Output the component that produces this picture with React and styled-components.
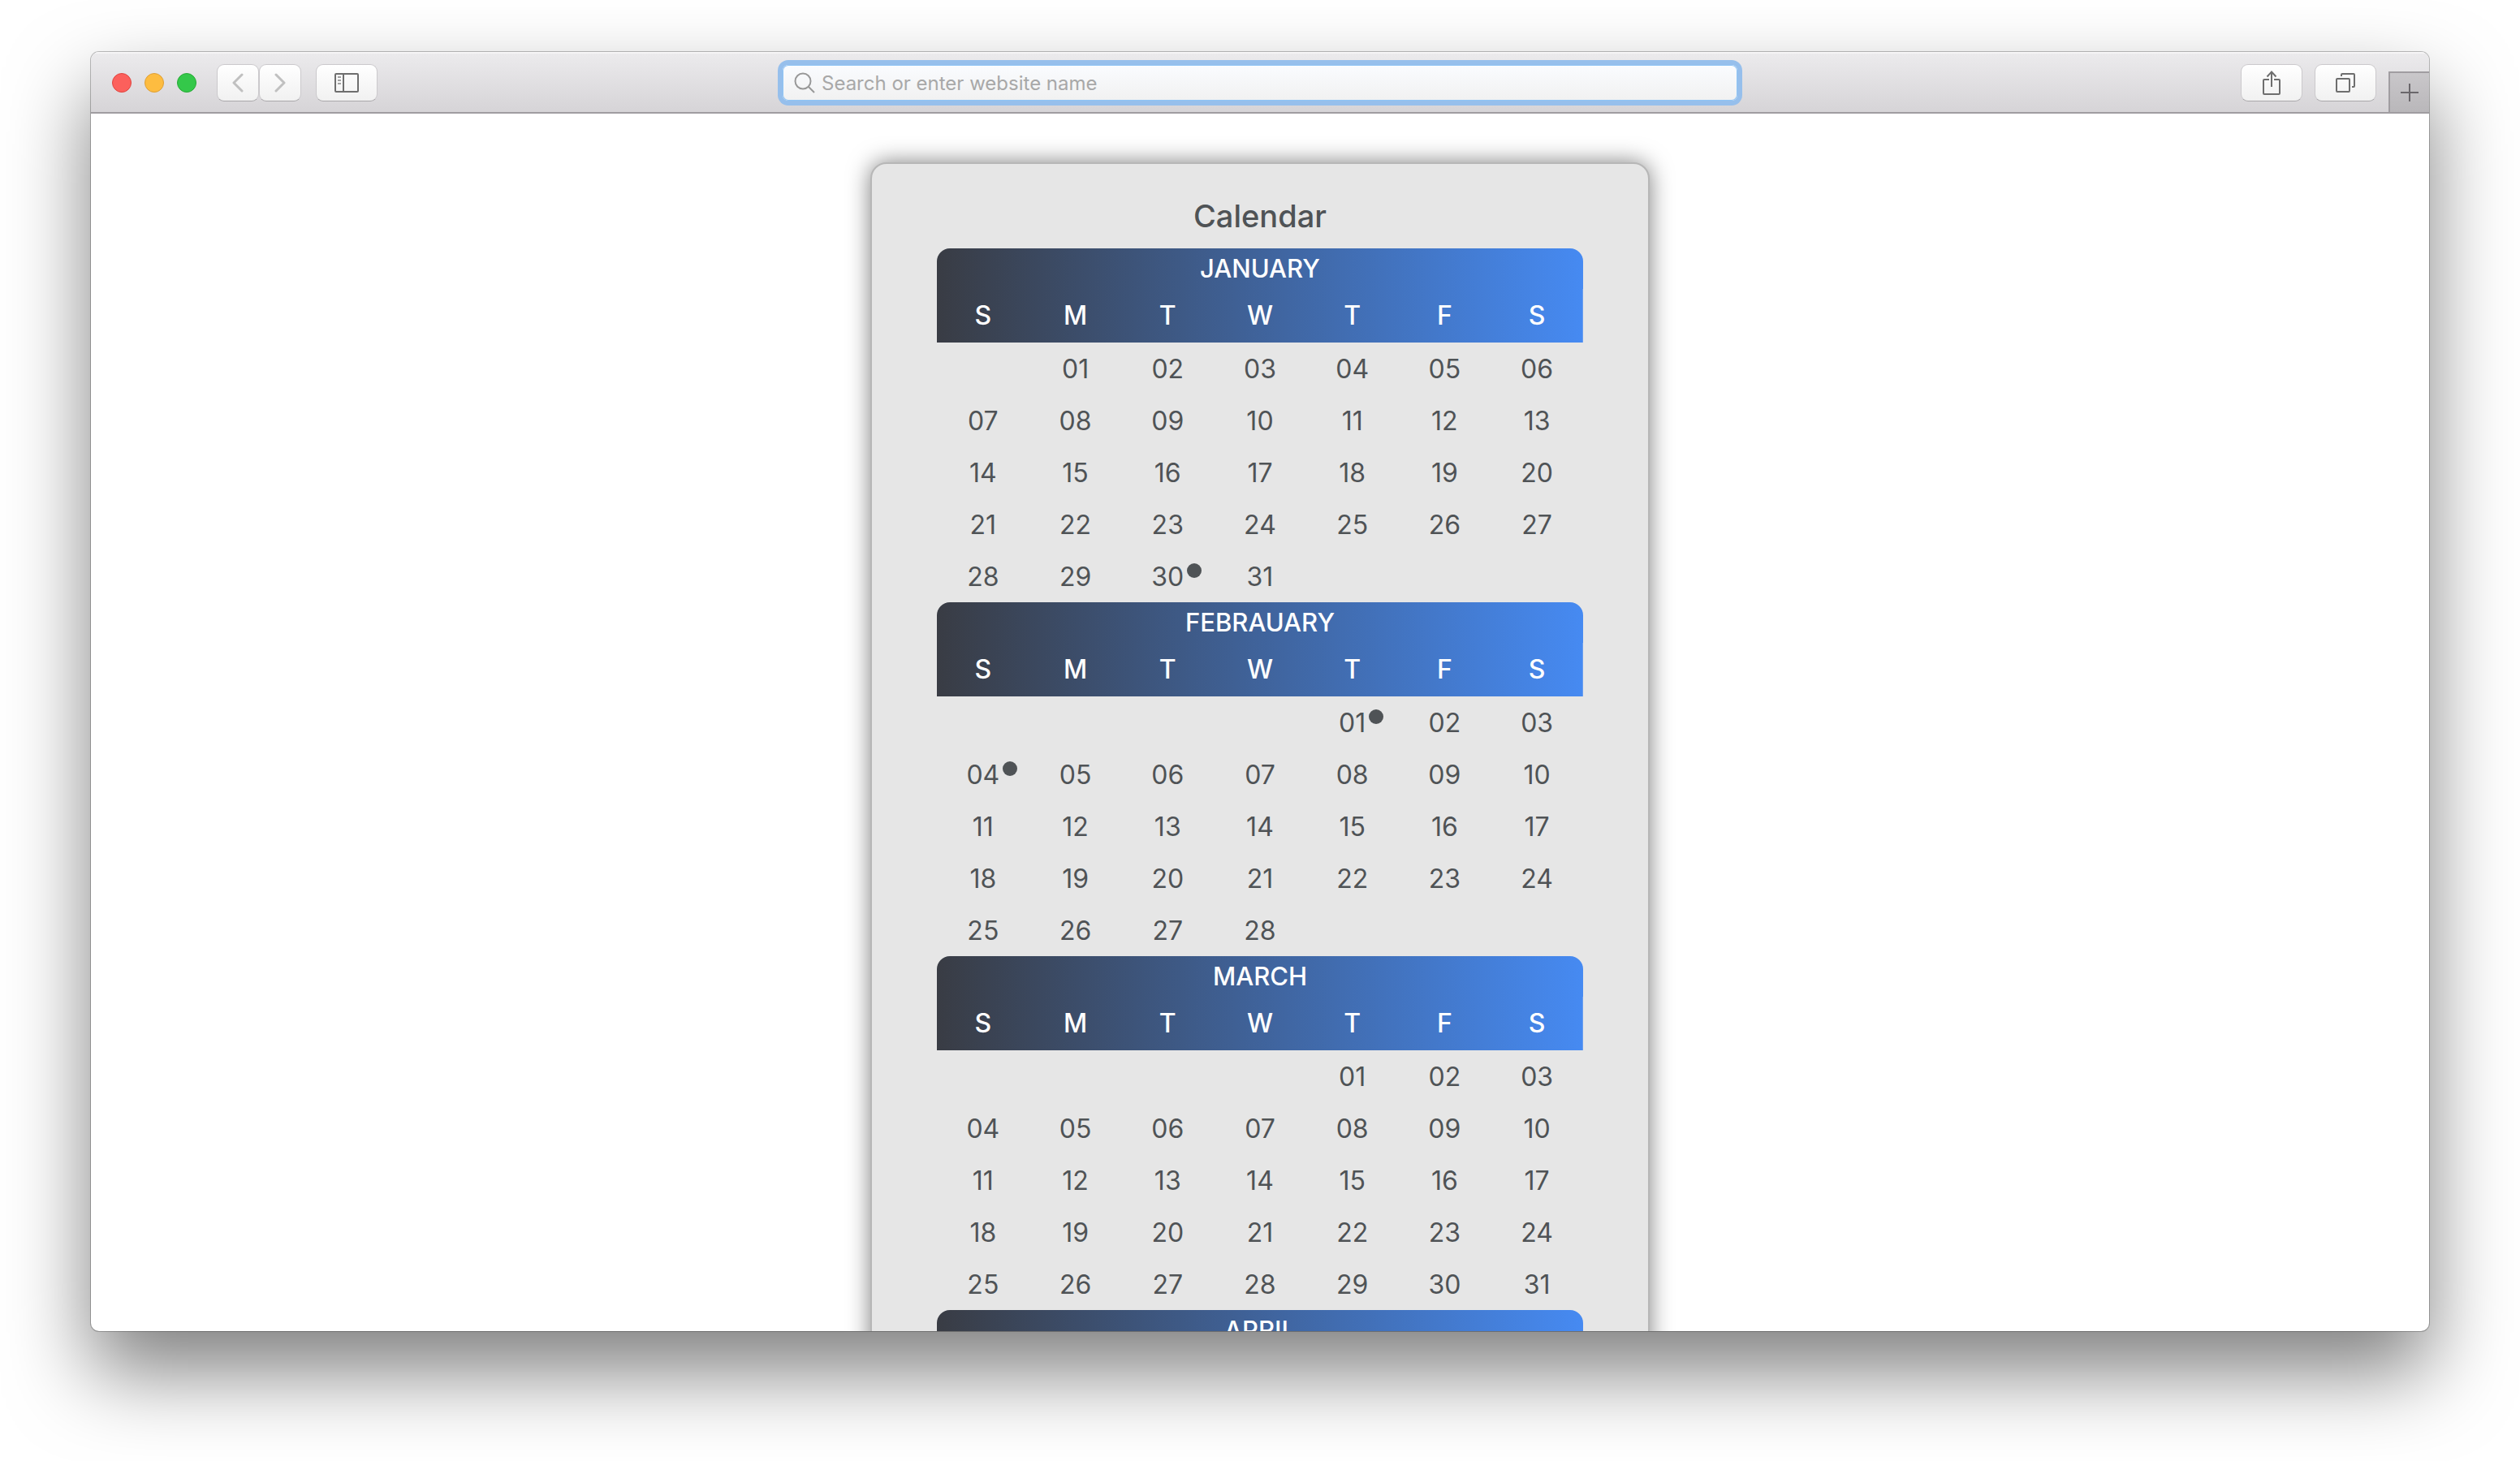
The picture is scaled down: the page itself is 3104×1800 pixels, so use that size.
import React from "react";
import styled, { createGlobalStyle } from "styled-components";

const GlobalStyle = createGlobalStyle`
  *, *::before, *::after { box-sizing: border-box; }
  body {
    margin: 0;
    background: #fff;
    font-family: Inter, "Liberation Sans", sans-serif;
  }
`;

const Desktop = styled.div`
  height: 100vh;
  padding: 64px 112px 160px;
  overflow: hidden;
`;

const BrowserWindow = styled.div`
  height: 100%;
  display: flex;
  flex-direction: column;
  overflow: hidden;
  border-radius: 10px;
  background: #fff;
  box-shadow: 0 0 0 1px rgba(0, 0, 0, 0.25), 0 50px 100px rgba(0, 0, 0, 0.5);
`;

const Toolbar = styled.header`
  display: grid;
  grid-template-columns: 1fr minmax(0, 1176px) 1fr;
  align-items: center;
  flex: none;
  height: 76px;
  padding-top: 2px;
  background: linear-gradient(#ecebed, #d6d4d7);
  border-bottom: 2px solid #a09da1;
  box-shadow: inset 0 2px 0 #f6f5f6;
`;

const Controls = styled.div`
  display: flex;
  align-items: center;
  gap: 18px;
  padding-left: 26px;
`;

const Lights = styled.div`
  display: flex;
  gap: 16px;
  margin-right: 7px;
`;

const Light = styled.button`
  width: 24px;
  height: 24px;
  padding: 0;
  border: 1px solid ${(p) => p.$edge};
  border-radius: 50%;
  background: ${(p) => p.$fill};
`;

const ButtonPair = styled.div`
  display: flex;
`;

const ToolButton = styled.button`
  display: flex;
  align-items: center;
  justify-content: center;
  width: ${(p) => (p.$narrow ? 52 : 76)}px;
  height: 46px;
  padding: 0;
  border: 1px solid #cbc9cc;
  border-bottom-color: #a9a7aa;
  border-radius: 9px;
  background: linear-gradient(#fff, #f1f1f1);
  color: ${(p) => (p.$narrow ? "#c0c0c0" : "#6e6e6e")};
`;

const AddressBar = styled.label`
  display: flex;
  align-items: center;
  gap: 8px;
  height: 44px;
  padding: 0 14px;
  border-radius: 7px;
  background: linear-gradient(#fafcff, #f1f1f1);
  box-shadow: inset 0 0 0 1px #8fc4f5, 0 0 0 6px #96bfec;
  color: #989898;
`;

const AddressInput = styled.input`
  flex: 1;
  min-width: 0;
  padding: 2px 0 0;
  border: 0;
  outline: 0;
  background: transparent;
  color: #333;
  font: 24px/32px Inter, "Liberation Sans", sans-serif;
  &::placeholder { color: #a8a8a8; opacity: 1; }
`;

const Actions = styled.div`
  display: flex;
  align-items: center;
  justify-content: flex-end;
  align-self: stretch;
  gap: 15px;
`;

const NewTab = styled.button`
  display: flex;
  align-items: center;
  justify-content: center;
  align-self: flex-end;
  width: 50px;
  height: 50px;
  padding: 0;
  border: solid #a09da1;
  border-width: 2px 0 0 2px;
  background: linear-gradient(#c9c7ca, #b9b7ba);
  color: #6a676b;
`;

const Page = styled.main`
  flex: 1;
  min-height: 0;
  overflow: hidden;
  padding-top: 60px;
`;

const Card = styled.section`
  width: 33.3333%;
  margin: 0 auto;
  padding: 38px 80px;
  border: 2px solid #b7b7b7;
  border-radius: 20px;
  background: #e6e6e6;
  box-shadow: 0 0 28px rgba(0, 0, 0, 0.5);
  color: #4f5356;
`;

const Title = styled.h1`
  margin: 0;
  padding-bottom: 14px;
  font-size: 38px;
  line-height: 52px;
  font-weight: 500;
  text-align: center;
`;

const MonthTable = styled.table`
  width: 100%;
  table-layout: fixed;
  border-collapse: collapse;
  font-size: 32px;
  line-height: 40px;
  text-align: center;
`;

const MonthHead = styled.thead`
  background: linear-gradient(to right, #393c44, #468af2);
  clip-path: inset(0 round 16px 16px 0 0);
  color: #fff;
`;

const MonthName = styled.th`
  height: 50px;
  padding: 0;
  font-size: 31px;
  font-weight: 500;
`;

const Weekday = styled.th`
  height: 66px;
  padding: 0;
  font-weight: 500;
`;

const Day = styled.td`
  height: 64px;
  padding: 2px 0 0;
`;

const DayNumber = styled.span`
  position: relative;
`;

const EventDot = styled.i`
  position: absolute;
  top: 3px;
  left: 100%;
  width: 18px;
  height: 18px;
  margin-left: 4px;
  border-radius: 50%;
  background: #4f5356;
`;

const WEEKDAYS = ["S", "M", "T", "W", "T", "F", "S"];

const MONTHS = [
  { name: "JANUARY", start: 1, days: 31, events: [30] },
  { name: "FEBRAUARY", start: 4, days: 28, events: [1, 4] },
  { name: "MARCH", start: 4, days: 31, events: [] },
  { name: "APRIL", collapsed: true },
];

function weeksOf({ start, days }) {
  const weeks = [];
  for (let first = 1 - start; first <= days; first += 7) {
    weeks.push(
      Array.from({ length: 7 }, (_, i) => {
        const day = first + i;
        return day >= 1 && day <= days ? day : null;
      })
    );
  }
  return weeks;
}

function Month({ month }) {
  return (
    <MonthTable>
      <MonthHead>
        <tr>
          <MonthName colSpan={7}>{month.name}</MonthName>
        </tr>
        {!month.collapsed && (
          <tr>
            {WEEKDAYS.map((d, i) => (
              <Weekday key={i}>{d}</Weekday>
            ))}
          </tr>
        )}
      </MonthHead>
      {!month.collapsed && (
        <tbody>
          {weeksOf(month).map((week, w) => (
            <tr key={w}>
              {week.map((day, i) => (
                <Day key={i}>
                  {day && (
                    <DayNumber>
                      {String(day).padStart(2, "0")}
                      {month.events.includes(day) && <EventDot />}
                    </DayNumber>
                  )}
                </Day>
              ))}
            </tr>
          ))}
        </tbody>
      )}
    </MonthTable>
  );
}

const Chevron = ({ d }) => (
  <svg width="14" height="24" viewBox="0 0 14 24" fill="none" stroke="currentColor" strokeWidth="3" strokeLinecap="round" strokeLinejoin="round">
    <path d={d} />
  </svg>
);

export default function App() {
  return (
    <>
      <GlobalStyle />
      <Desktop>
        <BrowserWindow>
          <Toolbar>
            <Controls>
              <Lights>
                <Light aria-label="Close" $fill="#fc605c" $edge="#e0443f" />
                <Light aria-label="Minimize" $fill="#fdbc40" $edge="#de9f34" />
                <Light aria-label="Zoom" $fill="#34c84a" $edge="#27aa35" />
              </Lights>
              <ButtonPair>
                <ToolButton $narrow aria-label="Back">
                  <Chevron d="M12 2 2 12l10 10" />
                </ToolButton>
                <ToolButton $narrow aria-label="Forward">
                  <Chevron d="M2 2l10 10L2 22" />
                </ToolButton>
              </ButtonPair>
              <ToolButton aria-label="Show sidebar">
                <svg width="30" height="24" viewBox="0 0 30 24" fill="none" stroke="currentColor" strokeWidth="2">
                  <rect x="1" y="1" width="28" height="22" rx="1" />
                  <path d="M11 1v22" />
                  <path d="M4 5h4M4 9h4M4 13h4" stroke="#a0a0a0" />
                </svg>
              </ToolButton>
            </Controls>
            <AddressBar>
              <svg width="26" height="26" viewBox="0 0 26 26" fill="none" stroke="currentColor" strokeWidth="2">
                <circle cx="11" cy="11" r="9.5" />
                <path d="M18 18l7 7" />
              </svg>
              <AddressInput type="text" aria-label="Address" placeholder="Search or enter website name" />
            </AddressBar>
            <Actions>
              <ToolButton aria-label="Share">
                <svg width="22" height="30" viewBox="0 0 22 30" fill="none" stroke="currentColor" strokeWidth="2">
                  <path d="M8 11H2a1 1 0 0 0-1 1v16a1 1 0 0 0 1 1h18a1 1 0 0 0 1-1V12a1 1 0 0 0-1-1h-6" />
                  <path d="M11 20V2M5.500 7.500 11 1.500l5.500 6" />
                </svg>
              </ToolButton>
              <ToolButton aria-label="Show all tabs">
                <svg width="24" height="24" viewBox="0 0 24 24" fill="none" stroke="currentColor" strokeWidth="2">
                  <rect x="1" y="7" width="16" height="16" rx="1" />
                  <path d="M7 4V2a1 1 0 0 1 1-1h14a1 1 0 0 1 1 1v14a1 1 0 0 1-1 1h-2" />
                </svg>
              </ToolButton>
              <NewTab aria-label="New tab">
                <svg width="22" height="22" viewBox="0 0 22 22" fill="none" stroke="currentColor" strokeWidth="2">
                  <path d="M11 0v22M0 11h22" />
                </svg>
              </NewTab>
            </Actions>
          </Toolbar>
          <Page>
            <Card>
              <Title>Calendar</Title>
              {MONTHS.map((m) => (
                <Month key={m.name} month={m} />
              ))}
            </Card>
          </Page>
        </BrowserWindow>
      </Desktop>
    </>
  );
}
